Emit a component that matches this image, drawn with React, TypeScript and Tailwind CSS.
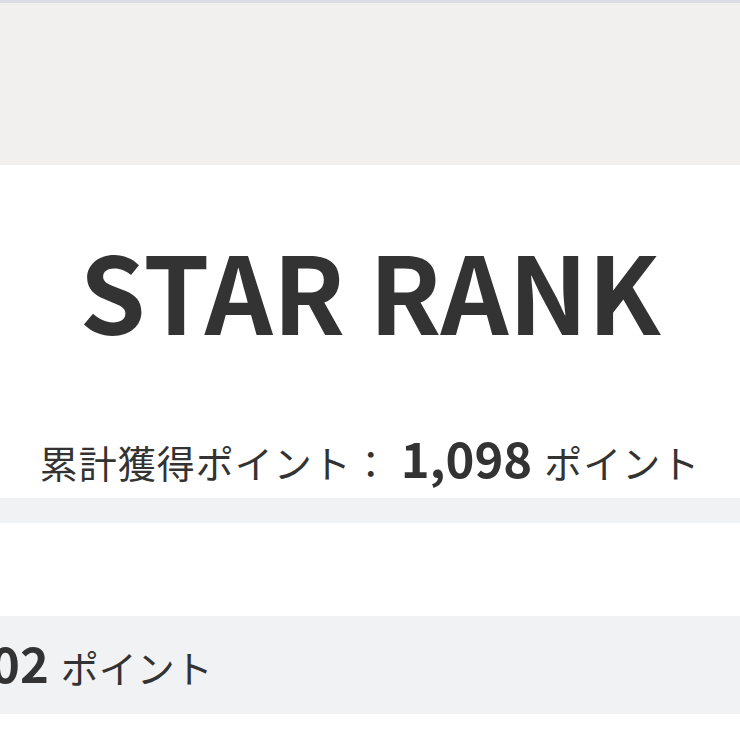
export default function App() {
  return (
    <div className="w-[740px] h-[740px] overflow-hidden bg-white text-[#333333] font-['Noto_Sans_CJK_JP','Noto_Sans',sans-serif]">
      <div className="h-[3px] bg-[#dcdce4]" />
      <div className="h-[162px] bg-[#f1f0ee]" />

      <section className="h-[333px] flex flex-col items-center pt-[71px]">
        <h1 className="text-[106px] leading-none font-bold">STAR RANK</h1>
        <div className="mt-[90px] flex items-baseline leading-none">
          <span className="text-[38px] tracking-[1px]">累計獲得ポイント：</span>
          <span className="text-[49px] font-bold ml-[10px]">1,098</span>
          <span className="text-[38px] tracking-[1px] ml-[12px]">ポイント</span>
        </div>
      </section>

      <div className="h-[25px] bg-[#f1f2f4]" />
      <div className="h-[93px] bg-white" />

      <div className="h-[98px] bg-[#f1f2f4] pt-[21px]">
        <div className="flex items-baseline leading-none -ml-[9px]">
          <span className="text-[49px] font-bold">02</span>
          <span className="text-[38px] ml-[12px]">ポイント</span>
        </div>
      </div>
      <div className="h-[26px] bg-white" />
    </div>
  );
}
